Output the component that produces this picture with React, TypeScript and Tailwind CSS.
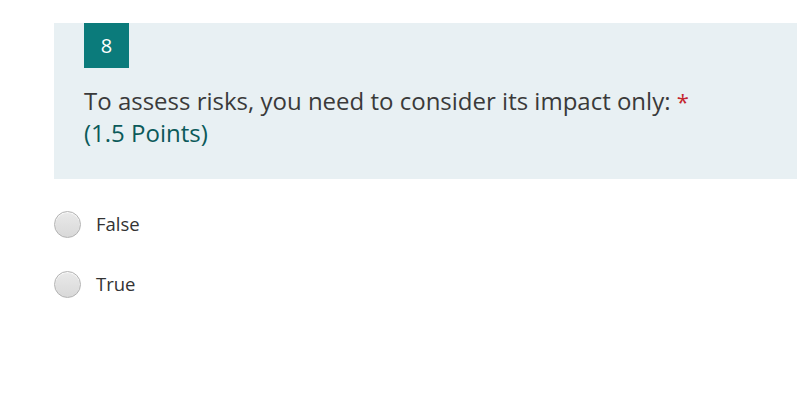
const Radio = ({ label }: { label: string }) => (
  <label className="flex items-center gap-[15px] h-[28px]">
    <span className="size-[27px] rounded-full border border-[#b3b3b3] bg-gradient-to-b from-[#e9e9e9] to-[#d9d9d9] shadow-[inset_0_1px_1px_rgba(255,255,255,0.8)]" />
    <span className="text-[18.5px] text-[#333333]">{label}</span>
  </label>
);

export default function App() {
  return (
    <div className="w-[797px] h-[400px] bg-white font-['Open_Sans','Noto_Sans',sans-serif] overflow-hidden">
      <div className="pt-[23px] pl-[54px]">
        <div className="bg-[#e8f0f3] h-[156px] pl-[30px]">
          <div className="flex items-center justify-center w-[45px] h-[45px] bg-[#0b7b7b] text-white text-[20px]">
            8
          </div>
          <div className="mt-[17px] text-[24px] leading-[31px] text-[#3a3a3a]">
            <div>
              To assess risks, you need to consider its impact only: <span className="text-[#c4262e] text-[22px]">*</span>
            </div>
            <div className="text-[#0b5a5a]">(1.5 Points)</div>
          </div>
        </div>
        <div className="mt-[31px] flex flex-col gap-[32px]">
          <Radio label="False" />
          <Radio label="True" />
        </div>
      </div>
    </div>
  );
}
